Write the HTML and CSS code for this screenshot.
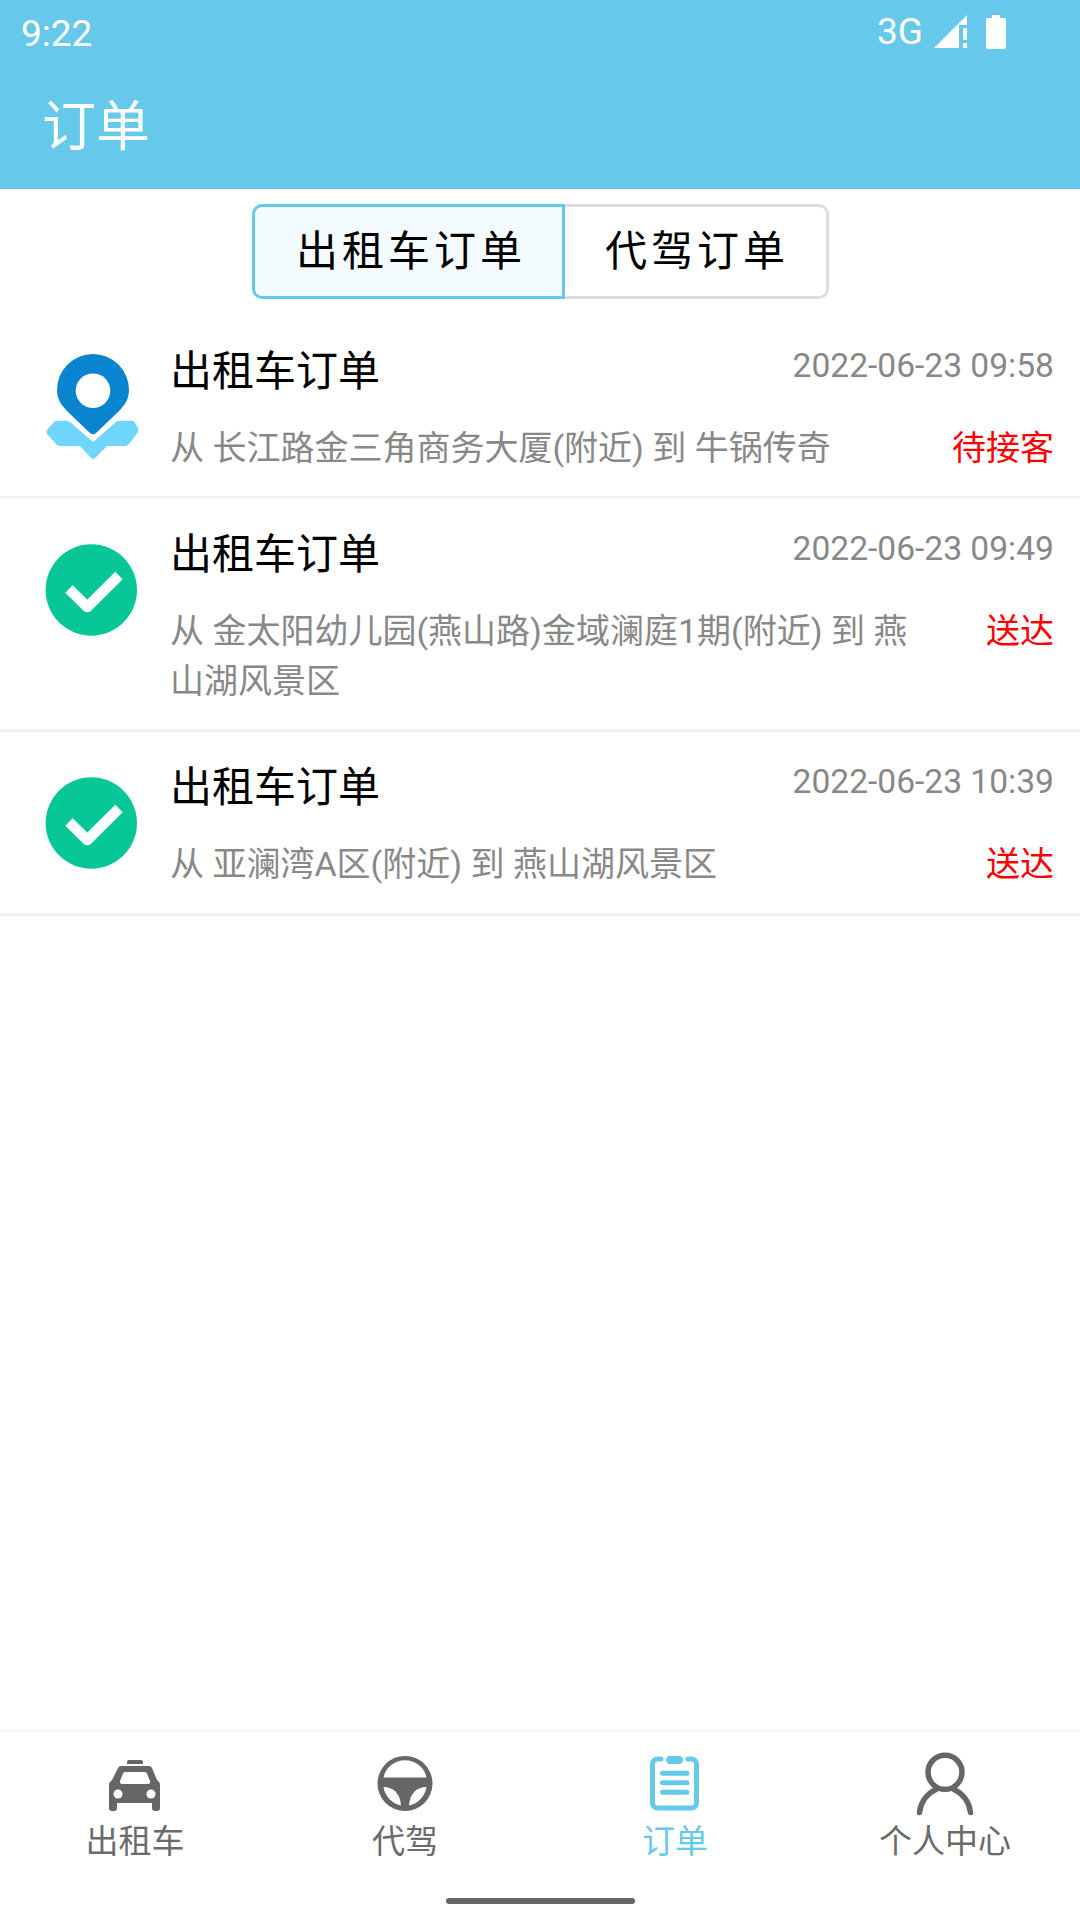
FILE: index.html
```html
<!DOCTYPE html>
<html lang="zh-CN">
<head>
  <meta charset="UTF-8">
  <title>订单</title>
  <link rel="stylesheet" href="styles.css">
</head>
<body>
  <div class="header">
    <div class="statusbar">
      <span class="clock">9:22</span>
      <div class="status-icons">
        <span class="network">3G</span>
        <svg class="signal" width="34" height="33" viewBox="0 0 34 33">
          <path d="M0 33 L33 0 V10 H25 V33 Z"/>
          <path d="M29 13 H33 V25 H29 Z M29 28 H33 V33 H29 Z"/>
        </svg>
        <svg class="battery" width="20" height="34" viewBox="0 0 20 34">
          <path d="M6 0 H14 V3 H18 Q20 3 20 5 V32 Q20 34 18 34 H2 Q0 34 0 32 V5 Q0 3 2 3 H6 Z"/>
        </svg>
      </div>
    </div>
    <h1>订单</h1>
  </div>

  <div class="tabs">
    <div class="tab active">出租车订单</div>
    <div class="tab second">代驾订单</div>
  </div>

  <div class="list">
    <div class="row">
      <div class="row-icon">
        <svg width="94" height="106" viewBox="0 0 94 106">
          <path class="wing" d="M2 76 L9 68 Q10 66.700 12 66.700 H21 Q23 66.700 25 68 L48 88 L71 68 Q73 66.700 75 66.700 H87 Q88.500 66.700 89.500 68 L93 74 Q94 76 93 78 L84 90 Q82.500 92 80 92 H62 L50 104 Q48 106 46 104 L35 92 H15 Q13 92 11 90 L2 80 Q0.500 78 2 76 Z"/>
          <path class="pin" d="M48 0 A36 36 0 0 1 84 36 C84 46 79 52 72 59 L51 79 Q48 81.500 45 79 L24 59 C17 52 12 46 12 36 A36 36 0 0 1 48 0 Z"/>
          <circle class="hole" cx="48" cy="36.700" r="17.300"/>
        </svg>
      </div>
      <div class="row-body">
        <div class="row-top">
          <div class="row-title">出租车订单</div>
          <div class="row-date">2022-06-23 09:58</div>
        </div>
        <div class="row-bottom">
          <div class="row-route">从 长江路金三角商务大厦(附近) 到 牛锅传奇</div>
          <div class="row-status">待接客</div>
        </div>
      </div>
    </div>

    <div class="row">
      <div class="row-icon">
        <svg width="94" height="92" viewBox="0 0 94 92">
          <circle class="done" cx="46.300" cy="46" r="45.700"/>
          <path class="tick" d="M24 45 L42.300 63 L74 31.500"/>
        </svg>
      </div>
      <div class="row-body">
        <div class="row-top">
          <div class="row-title">出租车订单</div>
          <div class="row-date">2022-06-23 09:49</div>
        </div>
        <div class="row-bottom">
          <div class="row-route">从 金太阳幼儿园(燕山路)金域澜庭1期(附近) 到 燕山湖风景区</div>
          <div class="row-status">送达</div>
        </div>
      </div>
    </div>

    <div class="row">
      <div class="row-icon">
        <svg width="94" height="92" viewBox="0 0 94 92">
          <circle class="done" cx="46.300" cy="46" r="45.700"/>
          <path class="tick" d="M24 45 L42.300 63 L74 31.500"/>
        </svg>
      </div>
      <div class="row-body">
        <div class="row-top">
          <div class="row-title">出租车订单</div>
          <div class="row-date">2022-06-23 10:39</div>
        </div>
        <div class="row-bottom">
          <div class="row-route">从 亚澜湾A区(附近) 到 燕山湖风景区</div>
          <div class="row-status">送达</div>
        </div>
      </div>
    </div>
  </div>

  <div class="nav">
    <div class="nav-item">
      <svg width="64" height="64" viewBox="0 0 64 64">
        <path d="M26 8 H38 Q40 8 40 10 V12 H24 V10 Q24 8 26 8 Z"/>
        <path fill-rule="evenodd" d="M18 14 H46 Q48 14 49 16 L54 28 L56 30 Q57 31 57 33 V56 Q57 59 54 59 H52 Q49 59 49 56 V51 H14 V56 Q14 59 11 59 H9 Q6 59 6 56 V33 Q6 31 7 30 L9 28 L15 16 Q16 14 18 14 Z M22 20 Q20.500 20 20 21.500 L17 29 Q16.500 32 19 32 H45 Q48 32 47 29 L44 21.500 Q43.500 20 42 20 Z"/>
        <circle class="cut" cx="15" cy="42" r="4.500"/>
        <circle class="cut" cx="48" cy="42" r="4.500"/>
      </svg>
      <span>出租车</span>
    </div>
    <div class="nav-item">
      <svg width="64" height="64" viewBox="0 0 64 64">
        <circle cx="32" cy="31.500" r="27.500"/>
        <path class="cut" d="M10.500 25.500 A22 22 0 0 1 53.500 25.500 Z"/>
        <path class="cut" d="M10.500 35 C20 35 27 41 28 53.500 A22.500 22.500 0 0 1 10.500 35 Z"/>
        <path class="cut" d="M53.500 35 C44 35 37 41 36 53.500 A22.500 22.500 0 0 0 53.500 35 Z"/>
      </svg>
      <span>代驾</span>
    </div>
    <div class="nav-item current">
      <svg width="64" height="64" viewBox="0 0 64 64">
        <path class="clip" d="M18 7 H14.500 A5 5 0 0 0 9.500 12 V51 A5 5 0 0 0 14.500 56 H48.500 A5 5 0 0 0 53.500 51 V12 A5 5 0 0 0 48.500 7 H45"/>
        <path class="clip clip-fat" d="M27 8 H36"/>
        <path class="clip" d="M19.500 21.300 H44 M19.500 30.700 H44 M19.500 40.300 H44"/>
      </svg>
      <span>订单</span>
    </div>
    <div class="nav-item">
      <svg width="64" height="64" viewBox="0 0 64 64">
        <circle class="outline" cx="32" cy="20.300" r="17"/>
        <path class="outline" d="M6.500 60.500 C8 49 15 41 23 37.500 M57.500 60.500 C56 49 49 41 41 37.500"/>
      </svg>
      <span>个人中心</span>
    </div>
  </div>

  <div class="gesture"><div class="gesture-bar"></div></div>
</body>
</html>
```

FILE: styles.css
```css
body {
  margin: 0;
  height: 100vh;
  display: flex;
  flex-direction: column;
  background: #fff;
  font-family: Roboto, "Noto Sans CJK SC", sans-serif;
}

/* top bar */
.header {
  height: 189px;
  background: #66c9eb;
  color: #fff;
}
.statusbar {
  height: 66px;
  padding: 0 74px 0 21px;
  display: flex;
  align-items: center;
  justify-content: space-between;
}
.clock {
  font-size: 37px;
}
.status-icons {
  display: flex;
  align-items: center;
  margin-bottom: 3px;
}
.network {
  font-size: 37px;
  font-weight: 450;
  margin-right: 11px;
}
.signal, .battery {
  fill: #fff;
}
.battery {
  margin-left: 18px;
}
.header h1 {
  margin: 0;
  padding: 27px 0 0 42px;
  font-size: 54px;
  line-height: 70px;
  font-weight: 400;
}

/* tabs */
.tabs {
  display: flex;
  justify-content: center;
  margin: 15px 0 17px;
  padding-left: 1px;
}
.tab {
  height: 95px;
  box-sizing: border-box;
  font-size: 42px;
  letter-spacing: 4px;
  line-height: 89px;
  color: #000;
  border: 3px solid #dedede;
}
.tab.active {
  width: 313px;
  padding-left: 41px;
  background: #f3fbfe;
  border-color: #66c9eb;
  border-radius: 10px 0 0 10px;
}
.tab.second {
  width: 264px;
  padding-left: 40px;
  border-left: 0;
  border-radius: 0 10px 10px 0;
}

/* order list */
.list {
  flex: 1;
}
.row {
  display: flex;
  padding: 27px 26px 23px 45px;
  border-bottom: 3px solid #f3f3f3;
}
.row:last-child {
  padding-bottom: 24px;
}
.row-icon {
  width: 94px;
  height: 128px;
  margin-right: 31px;
  flex-shrink: 0;
  display: flex;
  align-items: center;
}
.pin { fill: #0984d0; }
.wing { fill: #6fd6ff; }
.hole { fill: #fff; }
.done { fill: #07c798; }
.tick {
  fill: none;
  stroke: #fff;
  stroke-width: 10.500;
  stroke-linejoin: round;
}
.row-body {
  flex: 1;
  min-width: 0;
}
.row-top {
  display: flex;
  justify-content: space-between;
}
.row-title {
  font-size: 42px;
  line-height: 58px;
  color: #000;
}
.row-date {
  font-size: 33.600px;
  line-height: 45px;
  color: #888;
}
.row-bottom {
  display: flex;
  justify-content: space-between;
  margin-top: 22px;
}
.row-route {
  width: 750px;
  font-size: 34px;
  line-height: 50px;
  color: #888;
}
.row-status {
  font-size: 34px;
  line-height: 50px;
  color: #f00;
}

/* bottom nav */
.nav {
  display: flex;
  padding-top: 20px;
  border-top: 2px solid #f5f5f5;
}
.nav-item {
  flex: 1;
  display: flex;
  flex-direction: column;
  align-items: center;
  font-size: 33px;
  line-height: 40px;
  color: #6b6b6b;
  fill: #666;
}
.nav-item span {
  margin-top: 6px;
}
.nav-item.current {
  color: #66c9eb;
}
.cut { fill: #fff; }
.clip {
  fill: none;
  stroke: #66c9eb;
  stroke-width: 5;
  stroke-linecap: round;
}
.clip-fat { stroke-width: 8; }
.outline {
  fill: none;
  stroke: #666;
  stroke-width: 5.500;
  stroke-linecap: round;
}
.gesture {
  padding: 36px 0 16px;
  display: flex;
  justify-content: center;
}
.gesture-bar {
  width: 189px;
  height: 6px;
  border-radius: 3px;
  background: #666;
}
```
